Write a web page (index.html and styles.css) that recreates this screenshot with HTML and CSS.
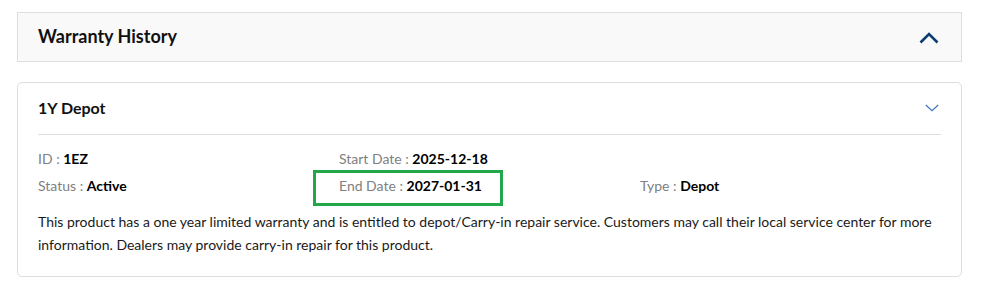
FILE: index.html
```html
<!DOCTYPE html>
<html lang="en">
<head>
    <meta charset="UTF-8">
    <title>Warranty History</title>
    <link rel="stylesheet" href="styles.css">
</head>
<body>
    <div class="page">
        <!-- Section header -->
        <div class="panel-header">
            <h2>Warranty History</h2>
            <svg class="chevron-up" width="20" height="12" viewBox="0 0 20 12">
                <polyline points="1.5,10.5 10,2 18.5,10.5" fill="none" stroke="#0b3d73" stroke-width="2.6"/>
            </svg>
        </div>

        <!-- Warranty card -->
        <div class="card">
            <div class="card-head">
                <h3>1Y Depot</h3>
                <svg class="chevron-down" width="14" height="8" viewBox="0 0 14 8">
                    <polyline points="0.8,1 7,6.8 13.2,1" fill="none" stroke="#3f74bd" stroke-width="1.2"/>
                </svg>
            </div>
            <div class="details">
                <div class="field"><span class="label">ID : </span><span class="value">1EZ</span></div>
                <div class="field"><span class="label">Start Date : </span><span class="value">2025-12-18</span></div>
                <div class="field"></div>
                <div class="field"><span class="label">Status : </span><span class="value">Active</span></div>
                <div class="field highlighted"><span class="label">End Date : </span><span class="value">2027-01-31</span></div>
                <div class="field"><span class="label">Type : </span><span class="value">Depot</span></div>
            </div>
            <p class="description">This product has a one year limited warranty and is entitled to depot/Carry-in repair service. Customers may call their local service center for more information. Dealers may provide carry-in repair for this product.</p>
        </div>
    </div>
</body>
</html>
```

FILE: styles.css
```css
body {
    margin: 0;
    font-family: Lato, "Open Sans", sans-serif;
    color: #1a1a1a;
    background: #fff;
}

.page {
    padding: 12px 23px 0 17px;
}

.panel-header {
    display: flex;
    justify-content: space-between;
    align-items: center;
    height: 48px;
    padding: 0 22px 0 20px;
    background: #f9f9f9;
    border: 1px solid #dedede;
}

.panel-header h2 {
    margin: 0 0 2px;
    font-size: 18px;
    font-weight: 700;
    color: #111;
}

.chevron-up {
    margin-top: 2px;
}

.card {
    margin-top: 20px;
    padding: 0 20px;
    border: 1px solid #dedede;
    border-radius: 5px;
}

.card-head {
    display: flex;
    justify-content: space-between;
    align-items: center;
    height: 51px;
    border-bottom: 1px solid #dedede;
    padding-right: 2px;
}

.card-head h3 {
    margin: 0 0 3px;
    font-size: 16px;
    font-weight: 700;
    color: #111;
}

.chevron-down {
    margin-top: -2px;
}

.details {
    display: grid;
    grid-template-columns: repeat(3, 1fr);
    row-gap: 7px;
    margin-top: 14px;
    font-size: 14px;
    line-height: 20px;
}

.field {
    position: relative;
}

.label {
    color: #808080;
}

.value {
    font-weight: 700;
    color: #000;
}

/* green highlight drawn over the end date */
.highlighted::after {
    content: "";
    position: absolute;
    left: -26px;
    top: -6px;
    width: 184px;
    height: 30px;
    border: 3px solid #22a84a;
}

.description {
    margin: 15px 0 20px;
    font-size: 14px;
    line-height: 22.5px;
    color: #1a1a1a;
}
```
